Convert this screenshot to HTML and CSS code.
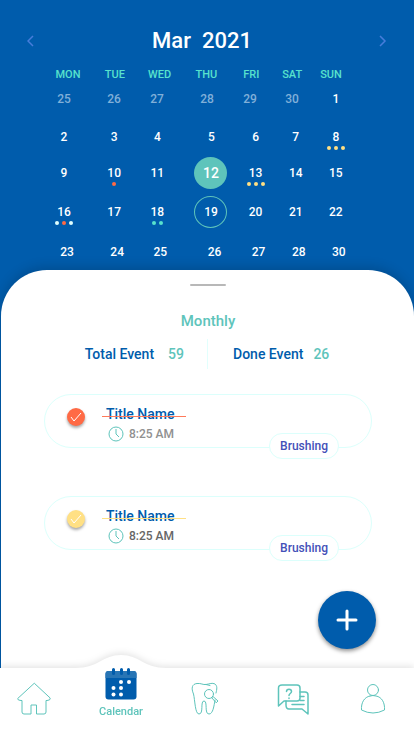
FILE: index.html
```html
<!DOCTYPE html>
<html lang="en">
<head>
<meta charset="utf-8">
<meta name="viewport" content="width=device-width, initial-scale=1">
<title>Calendar</title>
<link rel="stylesheet" href="styles.css">
</head>
<body>
<header class="month">
  <button class="arrow" aria-label="Previous month"><svg width="8" height="12" viewBox="0 0 8 12"><path d="M6 1 1 6l5 5"/></svg></button>
  <h1>Mar&nbsp; 2021</h1>
  <button class="arrow" aria-label="Next month"><svg width="8" height="12" viewBox="0 0 8 12"><path d="m1 1 5 5-5 5"/></svg></button>
</header>
<table class="calendar">
  <thead>
    <tr><th>MON</th><th>TUE</th><th>WED</th><th>THU</th><th>FRI</th><th>SAT</th><th>SUN</th></tr>
  </thead>
  <tbody>
    <tr class="first"><td class="out">25</td><td class="out">26</td><td class="out">27</td><td class="out">28</td><td class="out">29</td><td class="out">30</td><td>1</td></tr>
    <tr><td>2</td><td>3</td><td>4</td><td>5</td><td>6</td><td>7</td><td>8<span class="dots"><i class="yellow"></i><i class="yellow"></i><i class="yellow"></i></span></td></tr>
    <tr class="short"><td>9</td><td>10<span class="dots"><i class="red"></i></span></td><td>11</td><td class="selected">12</td><td>13<span class="dots"><i class="yellow"></i><i class="yellow"></i><i class="yellow"></i></span></td><td>14</td><td>15</td></tr>
    <tr class="tall"><td>16<span class="dots"><i class="pale"></i><i class="red"></i><i class="pale"></i></span></td><td>17</td><td>18<span class="dots"><i class="mint"></i><i class="mint"></i></span></td><td class="ringed">19</td><td>20</td><td>21</td><td>22</td></tr>
    <tr class="last"><td>23</td><td>24</td><td>25</td><td>26</td><td>27</td><td>28</td><td>30</td></tr>
  </tbody>
</table>
<main class="sheet">
  <div class="handle"></div>
  <h2>Monthly</h2>
  <div class="stats">
    <p class="stat total">Total Event <b>59</b></p>
    <p class="stat done">Done Event <b>26</b></p>
  </div>
  <article class="event coral">
    <label class="check"><input type="checkbox" checked aria-label="Title Name done"><svg width="18" height="18" viewBox="0 0 18 18"><path d="m4 9 3 4 7-8"/></svg></label>
    <div class="details">
      <h3>Title Name</h3>
      <p class="time"><svg width="16" height="16" viewBox="0 0 16 16"><circle cx="8" cy="8" r="7"/><path d="M8 3v5l3 3"/></svg>8:25 AM</p>
    </div>
    <span class="tag">Brushing</span>
  </article>
  <article class="event sand">
    <label class="check"><input type="checkbox" checked aria-label="Title Name done"><svg width="18" height="18" viewBox="0 0 18 18"><path d="m4 9 3 4 7-8"/></svg></label>
    <div class="details">
      <h3>Title Name</h3>
      <p class="time"><svg width="16" height="16" viewBox="0 0 16 16"><circle cx="8" cy="8" r="7"/><path d="M8 3v5l3 3"/></svg>8:25 AM</p>
    </div>
    <span class="tag">Brushing</span>
  </article>
  <button class="add" aria-label="Add event"><svg width="22" height="22" viewBox="0 0 22 22"><path d="M11 2v18M2 11h18"/></svg></button>
</main>
<nav class="tabs">
  <a href="#" aria-label="Home"><svg class="icon" width="34" height="34" viewBox="0 0 34 34"><path d="M17 1.500.700 16.500Q.500 18.500 4 18.500H5V30q0 2 2 2h7v-9h5.500v9H27q2 0 2-2V18.500h1q3.500 0 3.300-2z"/></svg></a>
  <a href="#" class="active">
    <svg class="bump" width="90" height="16" viewBox="0 0 90 16"><path d="M0 14C22 14 27 1 45 1s23 13 45 13v2H0z"/></svg>
    <svg width="32" height="32" viewBox="0 0 32 32"><rect x=".5" y="3" width="31" height="28.500" rx="3" fill="#005cac"/><path d="M.5 10V6q0-3 3-3h25q3 0 3 3v4z" fill="#2875b5"/><path d="M8.500 1.500v4M16.500 1.500v4M23.500 1.500v4" stroke="#005cac" stroke-width="3" stroke-linecap="round"/><g fill="#fff"><circle cx="16" cy="14" r="2"/><circle cx="24" cy="14" r="2"/><circle cx="8.500" cy="20" r="2"/><circle cx="16" cy="20" r="2"/><circle cx="8.500" cy="26.500" r="2"/><circle cx="16" cy="26.500" r="2"/></g></svg>
    <span>Calendar</span>
  </a>
  <a href="#" aria-label="Teeth"><svg class="icon" width="28" height="34" viewBox="0 0 28 34"><path d="M24 18c-1 6-2 14-6 14-5 0-1-13-5-13s0 13-5 13C4 32 4 18 2.500 12 0 6 1 2 6 1.500c4-.500 6 1.500 9 1 4-.600 6-2 9-.500 2.500 2 2 5 1 9M15 2.500q2 .500 4 1"/><circle cx="18" cy="12" r="4.500"/><path d="m21 15.500 1-1 5 4.500-1.500 1.500z"/></svg></a>
  <a href="#" aria-label="Messages"><svg class="icon chat" width="34" height="34" viewBox="0 0 34 34"><path d="M6 3h15q3 0 3 3v10q0 3-3 3H8l-5.500 5V6q0-3 3.500-3z"/><path d="M24 10h5q3 0 3 3v19l-6-5H13q-3 0-3-4v-4M24 14.500h4M24 18.500h4M16 22.500h12"/><path d="M10.500 9.500c0-3 5-3 5 0 0 2-2.500 2-2.500 4M13 16v.500"/></svg></a>
  <a href="#" aria-label="Profile"><svg class="icon" width="26" height="32" viewBox="0 0 26 32"><circle cx="13" cy="7" r="5.500"/><path d="M10 13C4 14 1 20 1.500 27q11.500 6 23 0C25 20 22 14 16 13q-3-1-6 0"/></svg></a>
</nav>
</body>
</html>
```
FILE: styles.css
```css
* { box-sizing: border-box; }
body {
  margin: 0;
  min-height: 100vh;
  display: flex;
  flex-direction: column;
  background: #005cac;
  color: #fff;
  font-family: Roboto, "Liberation Sans", sans-serif;
  font-weight: 500;
}
h1, h2, h3, p { margin: 0; font-weight: 500; }
button { border: 0; padding: 0; background: none; }
svg { display: block; }

.month {
  display: flex;
  align-items: center;
  justify-content: space-between;
  padding: 25px 25px 9px 27px;
}
.month h1 { padding-right: 12px; font-size: 22px; line-height: 32px; }
.arrow { width: 10px; height: 24px; }
.arrow path { fill: none; stroke: #477ddb; stroke-width: 1.500; }

.calendar { display: block; margin: 0 61px 0 47px; }
.calendar thead, .calendar tbody { display: block; }
.calendar tr {
  display: grid;
  grid-template-columns: 50fr 43fr 54fr 44fr 40fr 40fr 34fr;
  align-items: center;
  height: 38px;
}
.calendar thead tr {
  grid-template-columns: 47fr 45fr 47fr 45fr 41fr 39fr 34fr;
  height: 18px;
  margin: 0 5px 0 4px;
}
.calendar .first {
  grid-template-columns: 50fr 43fr 50fr 43fr 42fr 44fr 34fr;
  height: 30px;
  margin-bottom: 4px;
}
.calendar .short { height: 34px; }
.calendar .tall { height: 44px; }
.calendar .last { height: 36px; margin: 0 -3px 0 3px; }
th, td {
  position: relative;
  width: 34px;
  padding: 0;
  text-align: center;
  font-weight: 500;
  line-height: 16px;
  white-space: nowrap;
}
th { font-size: 11px; color: #58e2cd; }
td { font-size: 12px; }
.out { color: #81b0d9; }
.selected, .ringed {
  width: 33px;
  height: 32px;
  line-height: 32px;
  border-radius: 50%;
}
.selected { background: #5ec4bb; font-size: 14px; }
.ringed { border: 1px solid #5ec4bb; line-height: 30px; }
.dots {
  position: absolute;
  top: 17px;
  left: 0;
  width: 100%;
  display: flex;
  justify-content: center;
  gap: 3px;
}
.dots i { width: 4px; height: 4px; border-radius: 50%; }
.yellow { background: #ffe084; }
.red { background: #ff6a45; }
.pale { background: #dfffff; }
.mint { background: #58e2cd; }

.sheet {
  flex: 1;
  display: flex;
  flex-direction: column;
  margin-left: 1px;
  padding: 14px 42px 16px 43px;
  background: #fff;
  border-radius: 46px 46px 0 0;
  box-shadow: 0 -3px 12px rgba(0, 0, 0, .16);
  color: #005cac;
}
.handle { width: 36px; height: 2px; margin: 0 auto; background: #b8b8b8; border-radius: 1px; }
.sheet h2 { margin-top: 25px; font-size: 15px; line-height: 20px; text-align: center; color: #5ec4bb; }
.stats { display: grid; grid-template-columns: 1fr 1fr; margin-top: 8px; }
.stat { display: flex; align-items: center; height: 30px; font-size: 14px; }
.stat b { font-weight: 500; color: #5ec4bb; }
.total { justify-content: flex-end; gap: 14px; padding-right: 23px; border-right: 1px solid #e2fffd; }
.done { gap: 10px; padding-left: 25px; }

.event {
  position: relative;
  display: flex;
  gap: 20px;
  height: 54px;
  margin-top: 25px;
  padding: 10px 22px;
  border: 1px solid #dcfffc;
  border-radius: 27px;
}
.event + .event { margin-top: 48px; }
.check { position: relative; width: 18px; height: 18px; margin-top: 3px; border-radius: 50%; box-shadow: 0 2px 3px rgba(0, 0, 0, .35); }
.check input { position: absolute; inset: 0; width: 100%; height: 100%; margin: 0; opacity: 0; }
.check path { fill: none; stroke: #fff; stroke-width: 1; }
.coral .check { background: #ff6a45; }
.sand .check { background: #ffe084; }
.details h3 { position: relative; width: 84px; margin-left: -3px; padding-left: 4px; font-size: 14px; line-height: 18px; }
.details h3::after { content: ""; position: absolute; left: 0; right: 0; top: 11px; height: 1px; background: #ff7a5a; }
.sand h3::after { background: #ffe084; }
.time { display: flex; align-items: center; gap: 5px; margin: 2px 0 0 3px; font-size: 12px; line-height: 18px; color: #909090; }
.sand .time { color: #666; }
.time svg { fill: none; stroke: #5ec4bb; }
.tag {
  position: absolute;
  right: 32px;
  bottom: -12px;
  padding: 0 10px;
  border: 1px solid #dcfffc;
  border-radius: 13px;
  background: #fff;
  font-size: 12px;
  line-height: 24px;
  color: #4350b8;
}
.add {
  display: grid;
  place-items: center;
  width: 58px;
  height: 58px;
  margin: 41px -4px 0 auto;
  border-radius: 50%;
  background: #005cac;
  box-shadow: 0 2px 4px rgba(0, 0, 0, .45);
}
.add path { stroke: #fff; stroke-width: 3; stroke-linecap: round; }

.tabs {
  position: relative;
  display: grid;
  grid-template-columns: 87fr 84fr 88fr 80fr 44fr;
  height: 68px;
  padding: 0 19px 8px 12px;
  background: #fff;
  filter: drop-shadow(0 -2px 3px rgba(0, 0, 0, .1));
}
.tabs a {
  position: relative;
  display: flex;
  flex-direction: column;
  align-items: center;
  justify-content: center;
  width: 44px;
  color: #5ec4bb;
  text-decoration: none;
  font-size: 11px;
  line-height: 14px;
}
.tabs .active { justify-content: flex-end; padding-bottom: 11px; gap: 5px; }
.active > * { position: relative; }
.tabs .bump { position: absolute; left: -23px; top: -14px; fill: #fff; }
.icon { fill: none; stroke: #5ec4bb; stroke-width: 1; stroke-linejoin: round; stroke-linecap: round; }
.tabs .chat { stroke-width: 1.500; }
```
